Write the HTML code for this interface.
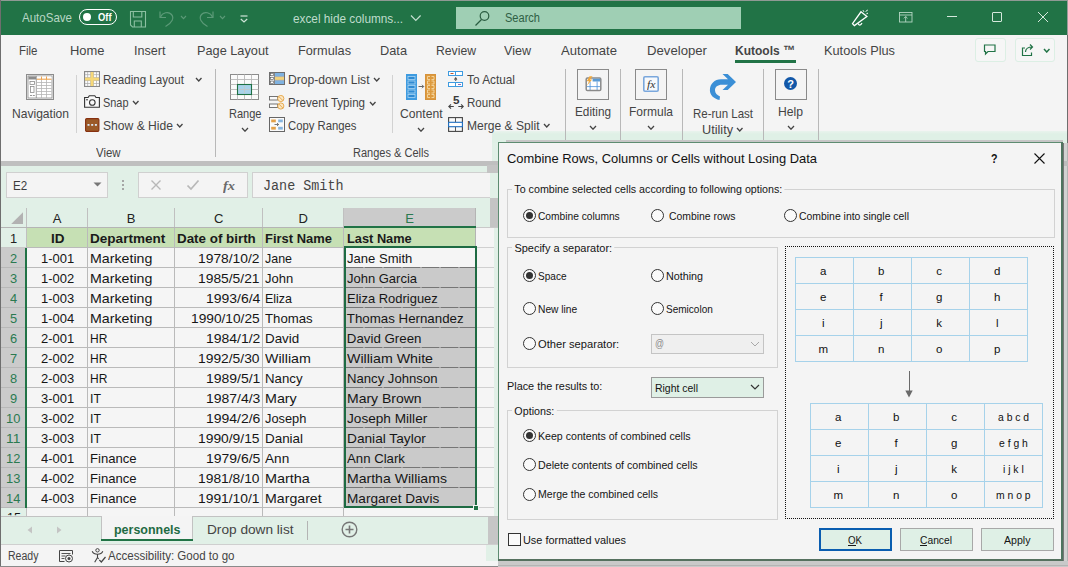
<!DOCTYPE html>
<html><head><meta charset="utf-8">
<style>
*{box-sizing:border-box;margin:0;padding:0}
html,body{width:1068px;height:567px;overflow:hidden;background:#f4f4f4;font-family:"Liberation Sans",sans-serif;}
.a{position:absolute;white-space:nowrap}
.t{position:absolute;white-space:nowrap;transform-origin:0 50%;line-height:1}
#title{left:0;top:0;width:1067px;height:35px;background:#217346}
#fbar{left:0;top:163px;width:1068px;height:45px;background:#e1f0e7}
.tab{color:#444;font-size:13.5px}
.rl{color:#444;font-size:13px}
.sep{position:absolute;width:1px;background:#d0d0d0}
</style></head><body>
<div class="a" id="title"></div>
<div class="a" style="left:0;top:161px;width:1068px;height:2px;background:#c8c8c8"></div>
<div class="a" id="fbar"></div>
<!-- gen_top -->
<div class="a" style="left:492px;top:131px;width:576px;height:12px;background:linear-gradient(#e9f3ed,#dff0e6 25%,#dff0e6);"></div>
<div class="a" style="left:0px;top:0px;width:1068px;height:1px;background:#8f9a94;"></div>
<div class="a" style="left:1067px;top:0px;width:1px;height:35px;background:#9a9a9a;"></div>
<div class="a" style="left:1066.6px;top:35px;width:1.4px;height:108px;background:#6e6e6e;"></div>
<div class="t" style="left:22.00px;top:10.87px;font-size:13.5px;color:#b7d6c4;transform:scaleX(0.8541);">AutoSave</div>
<div class="a" style="left:79px;top:9px;width:38px;height:16px;border:1.3px solid #fff;border-radius:8px;"></div>
<div class="a" style="left:83px;top:13px;width:8px;height:8px;background:#fff;border-radius:50%;"></div>
<div class="t" style="left:97.50px;top:12.84px;font-size:10px;color:#fff;font-weight:bold;transform:scaleX(0.9350);">Off</div>
<svg class="a" style="left:129px;top:10px;" width="18" height="18" viewBox="0 0 18 18" fill="none" stroke="#8cc0a2" stroke-width="1.1"><path d="M1.500 1.500h15v15.500h-13l-2-2z"/><path d="M4.300 1.500v5.500h8.500v-5.500"/><path d="M5.300 17v-6h7v6"/></svg>
<svg class="a" style="left:158px;top:9px;" width="18" height="19" viewBox="0 0 18 19" fill="none" stroke="#5c9a78" stroke-width="1.2"><path d="M2 2.500v6h6"/><path d="M2.500 8c2-4.500 8-6 11-2.500s0.500 8.500-6 12"/></svg>
<svg class="a" style="left:180px;top:15px;" width="7" height="4.6" viewBox="0 0 7 4.6" fill="none" stroke="#5c9a78" stroke-width="1.1"><path d="M1 1l2.5 2.6l2.5 -2.6"/></svg>
<svg class="a" style="left:197px;top:9px;" width="18" height="19" viewBox="0 0 18 19" fill="none" stroke="#5c9a78" stroke-width="1.2"><path d="M16 2.500v6h-6"/><path d="M15.500 8c-2-4.500-8-6-11-2.500s-0.500 8.500 6 12"/></svg>
<svg class="a" style="left:219px;top:15px;" width="7" height="4.6" viewBox="0 0 7 4.6" fill="none" stroke="#5c9a78" stroke-width="1.1"><path d="M1 1l2.5 2.6l2.5 -2.6"/></svg>
<svg class="a" style="left:239.3px;top:13.6px;" width="10" height="10" viewBox="0 0 10 10" fill="none" stroke="#cfe5d8" stroke-width="1.2"><path d="M1.500 2h7"/><path d="M1.800 5l3.200 3l3.200-3"/></svg>
<div class="t" style="left:293.00px;top:11.87px;font-size:13.5px;color:#bfdccc;transform:scaleX(0.8726);">excel hide columns...</div>
<svg class="a" style="left:409px;top:13px;" width="14" height="10" viewBox="0 0 14 10" fill="none" stroke="#c4dfd0" stroke-width="1.2"><path d="M2 2.500l4.800 4.800l4.800-4.800"/></svg>
<div class="a" style="left:456px;top:6.5px;width:285px;height:22.5px;background:#9fcfb4;"></div>
<svg class="a" style="left:474px;top:9px;" width="18" height="18" viewBox="0 0 18 18" fill="none" stroke="#2a5c40" stroke-width="1.2"><path d="M7.500 10.500l-6 6"/><circle cx="10.500" cy="7" r="4.300"/></svg>
<div class="t" style="left:505.00px;top:11.72px;font-size:12.5px;color:#2f6044;transform:scaleX(0.8837);">Search</div>
<svg class="a" style="left:851px;top:8px;" width="22" height="20" viewBox="0 0 22 20" fill="none" stroke="#fff" stroke-width="1.3"><path d="M10 3.800L15.900 8.400L3.400 17.600L1.500 15.600Z"/><path d="M7 15.500q1.800 3.300 4-0.300"/><path d="M12 2.200l0.900 1.600M14.600 3.500l2.200-1.500M15.400 5.800l1.600-0.700" stroke-width="1"/></svg>
<svg class="a" style="left:898.5px;top:11.5px;" width="15" height="12" viewBox="0 0 15 12" fill="none" stroke="#b4d6c3" stroke-width="0.9"><rect x="0.500" y="0.500" width="12.500" height="9.500"/><path d="M0.500 3h12.500"/><path d="M6.700 10v-5.500M4.900 6.300l1.800-1.800l1.800 1.800"/></svg>
<div class="a" style="left:947px;top:16px;width:10px;height:1px;background:#d5e8dc;"></div>
<div class="a" style="left:992px;top:12px;width:10px;height:10px;border:1px solid #d5e8dc;border-radius:1px;"></div>
<svg class="a" style="left:1037px;top:11px;" width="12" height="12" viewBox="0 0 12 12" fill="none" stroke="#d5e8dc" stroke-width="1"><path d="M1 1l10 10M11 1l-10 10"/></svg>
<div class="t" style="left:18.50px;top:43.87px;font-size:13.5px;color:#444;transform:scaleX(0.8505);">File</div>
<div class="t" style="left:70.00px;top:43.87px;font-size:13.5px;color:#444;transform:scaleX(0.9580);">Home</div>
<div class="t" style="left:134.00px;top:43.87px;font-size:13.5px;color:#444;transform:scaleX(0.9330);">Insert</div>
<div class="t" style="left:197.00px;top:43.87px;font-size:13.5px;color:#444;transform:scaleX(0.9431);">Page Layout</div>
<div class="t" style="left:298.00px;top:43.87px;font-size:13.5px;color:#444;transform:scaleX(0.9420);">Formulas</div>
<div class="t" style="left:380.00px;top:43.87px;font-size:13.5px;color:#444;transform:scaleX(0.9468);">Data</div>
<div class="t" style="left:436.00px;top:43.87px;font-size:13.5px;color:#444;transform:scaleX(0.9037);">Review</div>
<div class="t" style="left:504.00px;top:43.87px;font-size:13.5px;color:#444;transform:scaleX(0.9305);">View</div>
<div class="t" style="left:561.00px;top:43.87px;font-size:13.5px;color:#444;transform:scaleX(0.9691);">Automate</div>
<div class="t" style="left:647.00px;top:43.87px;font-size:13.5px;color:#444;transform:scaleX(0.9751);">Developer</div>
<div class="t" style="left:735.00px;top:43.87px;font-size:13.5px;color:#444;font-weight:bold;transform:scaleX(0.8890);">Kutools ™</div>
<div class="a" style="left:735px;top:60px;width:61px;height:3px;background:#217346;"></div>
<div class="t" style="left:824.00px;top:43.87px;font-size:13.5px;color:#444;transform:scaleX(0.9461);">Kutools Plus</div>
<div class="a" style="left:974.5px;top:38px;width:31.5px;height:24px;background:#f6f6f6;border:1px solid #dcefe4;border-radius:3px;"></div>
<svg class="a" style="left:983px;top:44px;" width="14" height="12" viewBox="0 0 14 12" fill="none" stroke="#217346" stroke-width="1.2"><path d="M1.500 1h10.500v6.500h-7l-2.500 2.500v-2.500h-1z"/></svg>
<div class="a" style="left:1014.5px;top:38px;width:40.5px;height:24px;background:#f6f6f6;border:1px solid #dcefe4;border-radius:3px;"></div>
<svg class="a" style="left:1021px;top:43px;" width="14" height="14" viewBox="0 0 14 14" fill="none" stroke="#217346" stroke-width="1.2"><path d="M4 5h-2.500v7.500h9v-3"/><path d="M4.500 9c0-3 2-5 7-5M9 1.500l2.500 2.500l-2.500 2.500"/></svg>
<svg class="a" style="left:1042.7px;top:48px;" width="7.5" height="5" viewBox="0 0 7.5 5" fill="none" stroke="#217346" stroke-width="1.5"><path d="M1 1l2.75 3l2.75 -3"/></svg>
<!-- gen_ribbon -->
<div class="a" style="left:215px;top:69px;width:1.2px;height:88px;background:#b8b8b8;"></div>
<div class="a" style="left:565.3px;top:69px;width:1.2px;height:88px;background:#b8b8b8;"></div>
<div class="a" style="left:620.3px;top:69px;width:1.2px;height:88px;background:#b8b8b8;"></div>
<div class="a" style="left:682px;top:69px;width:1.2px;height:88px;background:#b8b8b8;"></div>
<div class="a" style="left:763px;top:69px;width:1.2px;height:88px;background:#b8b8b8;"></div>
<div class="a" style="left:818px;top:69px;width:1.2px;height:88px;background:#b8b8b8;"></div>
<div class="a" style="left:76px;top:75px;width:1px;height:58px;background:#d2d2d2;"></div>
<div class="a" style="left:391.7px;top:75px;width:1px;height:58px;background:#d2d2d2;"></div>
<svg class="a" style="left:26px;top:74px;" width="28" height="26" viewBox="0 0 28 26" fill="none" stroke="none" stroke-width="1"><rect x="0.500" y="0.500" width="27" height="25" stroke="#8c8c8c" fill="#f3f3f3"/><rect x="2" y="2" width="24" height="22" fill="#fff" stroke="#8c8c8c" stroke-width="0.800"/><rect x="2.500" y="2.500" width="7.500" height="3" fill="#8c8c8c"/><rect x="10.500" y="2.500" width="15" height="3" fill="#fff"/><path d="M10.500 5.200h15" stroke="#e8912d" stroke-width="0.900"/><path d="M15.500 2.500v3M20.500 2.500v3" stroke="#e8912d" stroke-width="0.800"/><path d="M10.300 2v22" stroke="#8c8c8c" stroke-width="0.800"/><path d="M10.500 8.5h15" stroke="#b5b5b5" stroke-width="0.800"/><path d="M10.500 11.5h15" stroke="#b5b5b5" stroke-width="0.800"/><path d="M10.500 14.5h15" stroke="#b5b5b5" stroke-width="0.800"/><path d="M10.500 17.5h15" stroke="#b5b5b5" stroke-width="0.800"/><path d="M10.500 20.5h15" stroke="#b5b5b5" stroke-width="0.800"/><path d="M15.5 6v18" stroke="#b5b5b5" stroke-width="0.800"/><path d="M20.5 6v18" stroke="#b5b5b5" stroke-width="0.800"/><rect x="4" y="7.500" width="4.500" height="3" stroke="#8c8c8c" stroke-width="0.800" fill="#fff"/><rect x="4.500" y="12.500" width="3.500" height="6" stroke="#8c8c8c" stroke-width="0.800" fill="#fff"/><path d="M4 21.500h2M6.800 21.500h2" stroke="#8c8c8c" stroke-width="0.900"/></svg>
<div class="t" style="left:11.50px;top:107.30px;font-size:13px;color:#444;transform:scaleX(0.9279);">Navigation</div>
<svg class="a" style="left:84px;top:71px;" width="16" height="16" viewBox="0 0 16 16" fill="none" stroke="none" stroke-width="1"><rect x="0.500" y="0.500" width="15" height="15" fill="#a8a8a8" stroke="#8a8a8a"/><rect x="1.2" y="1.2" width="2.200" height="2.200" fill="#fbfbfb"/><rect x="1.2" y="4.1" width="2.200" height="2.200" fill="#fbfbfb"/><rect x="1.2" y="9.8" width="2.200" height="2.200" fill="#fbfbfb"/><rect x="1.2" y="12.7" width="2.200" height="2.200" fill="#fbfbfb"/><rect x="4.1" y="1.2" width="2.200" height="2.200" fill="#fbfbfb"/><rect x="4.1" y="4.1" width="2.200" height="2.200" fill="#fbfbfb"/><rect x="4.1" y="9.8" width="2.200" height="2.200" fill="#fbfbfb"/><rect x="4.1" y="12.7" width="2.200" height="2.200" fill="#fbfbfb"/><rect x="9.8" y="1.2" width="2.200" height="2.200" fill="#fbfbfb"/><rect x="9.8" y="4.1" width="2.200" height="2.200" fill="#fbfbfb"/><rect x="9.8" y="9.8" width="2.200" height="2.200" fill="#fbfbfb"/><rect x="9.8" y="12.7" width="2.200" height="2.200" fill="#fbfbfb"/><rect x="12.7" y="1.2" width="2.200" height="2.200" fill="#fbfbfb"/><rect x="12.7" y="4.1" width="2.200" height="2.200" fill="#fbfbfb"/><rect x="12.7" y="9.8" width="2.200" height="2.200" fill="#fbfbfb"/><rect x="12.7" y="12.7" width="2.200" height="2.200" fill="#fbfbfb"/><rect x="6.600" y="1" width="2.900" height="14" fill="#f6d878"/><rect x="1" y="6.600" width="14" height="2.900" fill="#f6d878"/></svg>
<div class="t" style="left:102.80px;top:73.30px;font-size:13px;color:#444;transform:scaleX(0.8894);">Reading Layout</div>
<svg class="a" style="left:194.5px;top:76.5px;" width="7.5" height="5" viewBox="0 0 7.5 5" fill="none" stroke="#444" stroke-width="1.3"><path d="M1 1l2.75 3l2.75 -3"/></svg>
<svg class="a" style="left:84px;top:95px;" width="16" height="13" viewBox="0 0 16 13" fill="none" stroke="none" stroke-width="1"><path d="M0.600 2.500h3.500l1.200-1.800h5.500l1.200 1.800h3.400v9.700h-14.800z" stroke="#333" stroke-width="1.100" fill="#f8f8f8"/><circle cx="8.300" cy="7.500" r="2.800" stroke="#333" stroke-width="1.100"/><rect x="2.300" y="4" width="1.400" height="1.400" fill="#333"/></svg>
<div class="t" style="left:103.00px;top:96.30px;font-size:13px;color:#444;transform:scaleX(0.8399);">Snap</div>
<svg class="a" style="left:132.0px;top:100.0px;" width="7.5" height="5" viewBox="0 0 7.5 5" fill="none" stroke="#444" stroke-width="1.3"><path d="M1 1l2.75 3l2.75 -3"/></svg>
<svg class="a" style="left:85px;top:118px;" width="15" height="14" viewBox="0 0 15 14" fill="none" stroke="none" stroke-width="1"><rect x="0.600" y="0.600" width="13.300" height="12.800" rx="1.200" fill="#9b5a28" stroke="#86300f" stroke-width="1.100"/><rect x="2.500" y="6" width="2" height="1.800" fill="#dbe6f2"/><rect x="6.200" y="6" width="2" height="1.800" fill="#dbe6f2"/><rect x="9.900" y="6" width="2" height="1.800" fill="#dbe6f2"/></svg>
<div class="t" style="left:103.00px;top:119.30px;font-size:13px;color:#444;transform:scaleX(0.9315);">Show &amp; Hide</div>
<svg class="a" style="left:176.0px;top:123.0px;" width="7.5" height="5" viewBox="0 0 7.5 5" fill="none" stroke="#444" stroke-width="1.3"><path d="M1 1l2.75 3l2.75 -3"/></svg>
<div class="t" style="left:96.00px;top:147.14px;font-size:12px;color:#444;transform:scaleX(0.9499);">View</div>
<svg class="a" style="left:230px;top:74px;" width="29" height="26" viewBox="0 0 29 26" fill="none" stroke="none" stroke-width="1"><rect x="0.500" y="0.500" width="28" height="25" fill="#fbfbfb" stroke="#8c8c8c"/><path d="M7.5 0.500v25" stroke="#b8b8b8" stroke-width="0.900"/><path d="M14.5 0.500v25" stroke="#b8b8b8" stroke-width="0.900"/><path d="M21.5 0.500v25" stroke="#b8b8b8" stroke-width="0.900"/><path d="M0.500 5.5h28" stroke="#b8b8b8" stroke-width="0.900"/><path d="M0.500 10.5h28" stroke="#b8b8b8" stroke-width="0.900"/><path d="M0.500 15.5h28" stroke="#b8b8b8" stroke-width="0.900"/><path d="M0.500 20.5h28" stroke="#b8b8b8" stroke-width="0.900"/><rect x="7.500" y="10.500" width="14" height="10" fill="#a9d3ea" stroke="#1e7145" stroke-width="1.100"/><path d="M14.500 11.500v8M8.500 15.500h12" stroke="#c0c8cc" stroke-width="0.900"/></svg>
<div class="t" style="left:228.50px;top:107.30px;font-size:13px;color:#444;transform:scaleX(0.8484);">Range</div>
<svg class="a" style="left:240.5px;top:126.5px;" width="8" height="5.2" viewBox="0 0 8 5.2" fill="none" stroke="#444" stroke-width="1.3"><path d="M1 1l3.0 3.2l3.0 -3.2"/></svg>
<svg class="a" style="left:269px;top:72px;" width="16" height="13" viewBox="0 0 16 13" fill="none" stroke="none" stroke-width="1"><rect x="0.500" y="0.500" width="15" height="12" fill="#ededed" stroke="#6e6e6e"/><rect x="5.800" y="1" width="9.200" height="3.500" fill="#7fb2e0"/><rect x="5.800" y="4.700" width="9.200" height="3.500" fill="#f3d27a"/><rect x="5.800" y="8.400" width="9.200" height="3.600" fill="#7fb2e0"/><path d="M5.500 0.500v12" stroke="#6e6e6e" stroke-width="0.800"/><path d="M5.500 4.600h9.500M5.500 8.300h9.500" stroke="#8d99a5" stroke-width="0.600"/><rect x="1.500" y="1.5" width="2.800" height="2.200" fill="#fff" stroke="#555" stroke-width="0.600"/><rect x="1.500" y="5.3" width="2.800" height="2.200" fill="#fff" stroke="#555" stroke-width="0.600"/><rect x="1.500" y="9.1" width="2.800" height="2.200" fill="#fff" stroke="#555" stroke-width="0.600"/></svg>
<div class="t" style="left:287.70px;top:73.30px;font-size:13px;color:#444;transform:scaleX(0.9322);">Drop-down List</div>
<svg class="a" style="left:372.5px;top:77.0px;" width="7.5" height="5" viewBox="0 0 7.5 5" fill="none" stroke="#444" stroke-width="1.3"><path d="M1 1l2.75 3l2.75 -3"/></svg>
<svg class="a" style="left:269px;top:95px;" width="16" height="15" viewBox="0 0 16 15" fill="none" stroke="none" stroke-width="1"><rect x="0.500" y="1.500" width="8" height="3.500" fill="#fafafa" stroke="#666" stroke-width="0.900"/><rect x="0.500" y="9" width="8" height="3.500" fill="#fafafa" stroke="#666" stroke-width="0.900"/><circle cx="11.800" cy="3.5" r="3.100" fill="#fbe7c4" stroke="#e5a443" stroke-width="0.900"/><path d="M9.700 1.4l4.200 4.200" stroke="#e5a443" stroke-width="0.900"/><circle cx="11.800" cy="11" r="3.100" fill="#fbe7c4" stroke="#e5a443" stroke-width="0.900"/><path d="M9.700 8.9l4.200 4.200" stroke="#e5a443" stroke-width="0.900"/></svg>
<div class="t" style="left:287.70px;top:96.30px;font-size:13px;color:#444;transform:scaleX(0.8904);">Prevent Typing</div>
<svg class="a" style="left:368.5px;top:100.5px;" width="7.5" height="5" viewBox="0 0 7.5 5" fill="none" stroke="#444" stroke-width="1.3"><path d="M1 1l2.75 3l2.75 -3"/></svg>
<svg class="a" style="left:269px;top:117px;" width="16" height="15" viewBox="0 0 16 15" fill="none" stroke="none" stroke-width="1"><rect x="0.500" y="0.500" width="15" height="14" fill="#fafafa" stroke="#666"/><rect x="2.200" y="2.500" width="4.600" height="2.800" fill="#e3a14a"/><rect x="2.200" y="9.800" width="4.600" height="2.800" fill="#e3a14a"/><rect x="9.200" y="2.500" width="4.600" height="2.800" fill="#86b5e0"/><rect x="9.200" y="9.800" width="4.600" height="2.800" fill="#86b5e0"/><path d="M5.500 7.500h4M8 6l1.600 1.500l-1.600 1.500" stroke="#555" stroke-width="0.800"/></svg>
<div class="t" style="left:287.70px;top:119.30px;font-size:13px;color:#444;transform:scaleX(0.8696);">Copy Ranges</div>
<div class="t" style="left:352.50px;top:147.14px;font-size:12px;color:#444;transform:scaleX(0.9189);">Ranges &amp; Cells</div>
<svg class="a" style="left:406px;top:74px;" width="31" height="26" viewBox="0 0 31 26" fill="none" stroke="none" stroke-width="1"><rect x="0.500" y="0.500" width="10" height="25" fill="#3e9be0" stroke="#3e9be0"/><rect x="2" y="2.5" width="7" height="3" fill="#2f8ad2" stroke="#a9d4f3" stroke-width="0.800"/><rect x="2" y="7" width="7" height="3" fill="#2f8ad2" stroke="#a9d4f3" stroke-width="0.800"/><rect x="2" y="11.5" width="7" height="3" fill="#2f8ad2" stroke="#a9d4f3" stroke-width="0.800"/><rect x="2" y="16" width="7" height="3" fill="#2f8ad2" stroke="#a9d4f3" stroke-width="0.800"/><rect x="2" y="20.5" width="7" height="3" fill="#2f8ad2" stroke="#a9d4f3" stroke-width="0.800"/><rect x="19.500" y="0.500" width="10" height="25" fill="#dd9a3e" stroke="#d6923a"/><path d="M24 2.5h-2.500v3h2.500M25.500 2.5h2.500v3h-2.500" stroke="#f9dfb0" stroke-width="0.800"/><path d="M24 7h-2.500v3h2.500M25.500 7h2.500v3h-2.500" stroke="#f9dfb0" stroke-width="0.800"/><path d="M24 11.5h-2.500v3h2.500M25.500 11.5h2.500v3h-2.500" stroke="#f9dfb0" stroke-width="0.800"/><path d="M24 16h-2.500v3h2.500M25.500 16h2.500v3h-2.500" stroke="#f9dfb0" stroke-width="0.800"/><path d="M24 20.5h-2.500v3h2.500M25.500 20.5h2.500v3h-2.500" stroke="#f9dfb0" stroke-width="0.800"/><path d="M12.500 12.500h5M16 10.800l1.700 1.700l-1.700 1.700" stroke="#555" stroke-width="0.900"/></svg>
<div class="t" style="left:399.50px;top:107.30px;font-size:13px;color:#444;transform:scaleX(0.9334);">Content</div>
<svg class="a" style="left:416.5px;top:126.5px;" width="8" height="5.2" viewBox="0 0 8 5.2" fill="none" stroke="#444" stroke-width="1.3"><path d="M1 1l3.0 3.2l3.0 -3.2"/></svg>
<svg class="a" style="left:448px;top:71px;" width="16" height="17" viewBox="0 0 16 17" fill="none" stroke="none" stroke-width="1"><rect x="0.500" y="0.500" width="14" height="4" fill="#fff" stroke="#3e9be0" stroke-width="1"/><path d="M7.500 0.500v4" stroke="#3e9be0"/><rect x="0.500" y="11.500" width="14" height="4" fill="#fff" stroke="#3e9be0" stroke-width="1"/><path d="M7.500 11.500v4" stroke="#3e9be0"/><path d="M2.500 2.500h3" stroke="#b5451b" stroke-width="0.900"/><path d="M10 13.500h3" stroke="#8b5aa8" stroke-width="0.900"/><path d="M7.700 6v3.500M6.300 8l1.400 1.500l1.400-1.500M6.500 7.500h2.400" stroke="#444" stroke-width="0.800"/></svg>
<div class="t" style="left:466.70px;top:73.30px;font-size:13px;color:#444;transform:scaleX(0.9099);">To Actual</div>
<svg class="a" style="left:448px;top:96px;" width="16" height="14" viewBox="0 0 16 14" fill="none" stroke="none" stroke-width="1"><path d="M0.800 10.500h5M3 8.300l-2.200 2.200l2.200 2.200M15.300 10.500h-5M13.100 8.300l2.200 2.200l-2.200 2.200" stroke="#444" stroke-width="1.100"/></svg>
<div class="t" style="left:453.00px;top:94.57px;font-size:11.5px;color:#3a3a3a;font-weight:bold;transform:scaleX(1.0163);">5</div>
<div class="t" style="left:466.70px;top:96.30px;font-size:13px;color:#444;transform:scaleX(0.8875);">Round</div>
<svg class="a" style="left:448px;top:117px;" width="15" height="15" viewBox="0 0 15 15" fill="none" stroke="none" stroke-width="1"><rect x="0.600" y="0.600" width="13.800" height="13.800" fill="#fafafa" stroke="#444" stroke-width="1.100"/><path d="M7.500 0.600v4.700M7.500 9.800v4.600" stroke="#444" stroke-width="0.900"/><rect x="0.600" y="5.300" width="13.800" height="4.400" fill="#fff" stroke="#1e6ec0" stroke-width="1.100"/></svg>
<div class="t" style="left:466.70px;top:119.30px;font-size:13px;color:#444;transform:scaleX(0.9291);">Merge &amp; Split</div>
<svg class="a" style="left:543.0px;top:123.0px;" width="7.5" height="5" viewBox="0 0 7.5 5" fill="none" stroke="#444" stroke-width="1.3"><path d="M1 1l2.75 3l2.75 -3"/></svg>
<div class="a" style="left:577px;top:69px;width:32px;height:31px;background:#f4f4f4;border:1px solid #8a8a8a;"></div>
<svg class="a" style="left:584.5px;top:75.5px;" width="17" height="16" viewBox="0 0 17 16" fill="none" stroke="none" stroke-width="1"><rect x="1.200" y="2" width="14.600" height="12.600" rx="1.300" fill="#fff" stroke="#8a8a8a" stroke-width="1.500"/><rect x="7.600" y="2.700" width="7.500" height="2.800" fill="#5a9bd5"/><path d="M5.100 5.500v8.500M12.100 5.500v8.500M2 10.600h13" stroke="#4a90d9" stroke-width="0.800"/><path d="M7.600 0.300h-3.100l-2.800 5h2.300l-2 4.200l5.200-5.900h-2.200z" fill="#f0a83c"/></svg>
<div class="t" style="left:574.50px;top:105.30px;font-size:13px;color:#444;transform:scaleX(0.9057);">Editing</div>
<svg class="a" style="left:588.5px;top:124.5px;" width="8" height="5.2" viewBox="0 0 8 5.2" fill="none" stroke="#444" stroke-width="1.3"><path d="M1 1l3.0 3.2l3.0 -3.2"/></svg>
<div class="a" style="left:635px;top:69px;width:32px;height:31px;background:#f4f4f4;border:1px solid #8a8a8a;"></div>
<svg class="a" style="left:643px;top:76px;" width="16" height="16" viewBox="0 0 16 16" fill="none" stroke="none" stroke-width="1"><rect x="0.800" y="0.800" width="14.400" height="14.400" rx="1.200" fill="#f7f9fc" stroke="#7aa7dc" stroke-width="1.600"/></svg>
<div class="t" style="left:646.50px;top:79.92px;font-size:10px;color:#333;font-family:'Liberation Serif',serif;font-style:italic;transform:scaleX(1.1778);">fx</div>
<div class="t" style="left:629.00px;top:105.30px;font-size:13px;color:#444;transform:scaleX(0.9229);">Formula</div>
<svg class="a" style="left:646.5px;top:124.5px;" width="8" height="5.2" viewBox="0 0 8 5.2" fill="none" stroke="#444" stroke-width="1.3"><path d="M1 1l3.0 3.2l3.0 -3.2"/></svg>
<svg class="a" style="left:709px;top:74px;" width="28" height="26" viewBox="0 0 28 26" fill="none" stroke="none" stroke-width="1"><path d="M13.500 0L18.700 0L27 8L18.700 16L13.500 16L19 10.700L13 10.700C8.500 10.700 6 13 6 16.200C6 19 8 21 11 22.500L10.500 26C4.500 24.500 0.900 21 0.900 16.200C0.900 10 5.500 5.300 12 5.300L19 5.300Z" fill="#3b8fd6"/></svg>
<div class="t" style="left:693.00px;top:107.30px;font-size:13px;color:#444;transform:scaleX(0.8834);">Re-run Last</div>
<div class="t" style="left:702.00px;top:123.30px;font-size:13px;color:#444;transform:scaleX(0.9756);">Utility</div>
<svg class="a" style="left:735.5px;top:127.0px;" width="7.5" height="5" viewBox="0 0 7.5 5" fill="none" stroke="#444" stroke-width="1.3"><path d="M1 1l2.75 3l2.75 -3"/></svg>
<div class="a" style="left:774.7px;top:69px;width:32px;height:31px;background:#f4f4f4;border:1px solid #8a8a8a;"></div>
<div class="a" style="left:784.2px;top:77.3px;width:13px;height:13px;background:#1257a8;border-radius:50%;"></div>
<div class="t" style="left:787.34px;top:78.99px;font-size:11px;color:#fff;font-weight:bold;">?</div>
<div class="t" style="left:778.00px;top:105.30px;font-size:13px;color:#444;transform:scaleX(0.9351);">Help</div>
<svg class="a" style="left:786.5px;top:124.5px;" width="8" height="5.2" viewBox="0 0 8 5.2" fill="none" stroke="#444" stroke-width="1.3"><path d="M1 1l3.0 3.2l3.0 -3.2"/></svg>
<!-- gen_grid -->
<div class="a" style="left:0px;top:161px;width:1068px;height:4.5px;background:#bfbfbf;"></div>
<div class="a" style="left:6px;top:172px;width:102px;height:26px;background:#f4f4f4;border:1px solid #d0d0d0;"></div>
<div class="t" style="left:12.50px;top:179.04px;font-size:13.3px;color:#3c3c3c;transform:scaleX(0.8729);">E2</div>
<svg class="a" style="left:93px;top:182px;" width="9" height="5" viewBox="0 0 9 5" fill="none" stroke="none" stroke-width="1"><path d="M0.500 0.500h8l-4 4z" fill="#777"/></svg>
<div class="a" style="left:122px;top:180px;width:2px;height:2px;background:#a6a6a6;"></div>
<div class="a" style="left:122px;top:184px;width:2px;height:2px;background:#a6a6a6;"></div>
<div class="a" style="left:122px;top:188px;width:2px;height:2px;background:#a6a6a6;"></div>
<div class="a" style="left:138px;top:172px;width:110px;height:26px;background:#f4f4f4;border:1px solid #d0d0d0;"></div>
<svg class="a" style="left:150px;top:179px;" width="12" height="12" viewBox="0 0 12 12" fill="none" stroke="#b8b8b8" stroke-width="1.4"><path d="M1.500 1.500l9 9M10.500 1.500l-9 9"/></svg>
<svg class="a" style="left:186px;top:179px;" width="14" height="12" viewBox="0 0 14 12" fill="none" stroke="#b8b8b8" stroke-width="1.7"><path d="M1.500 6.500l3.500 3.500l7.500-8.500"/></svg>
<div class="t" style="left:223.00px;top:178.99px;font-size:13.5px;color:#6a6a6a;font-family:'Liberation Serif',serif;font-weight:bold;font-style:italic;transform:scaleX(1.0671);">fx</div>
<div class="a" style="left:251.5px;top:172px;width:816px;height:26px;background:#f4f4f4;border:1px solid #d0d0d0;"></div>
<div class="t" style="left:262.50px;top:179.19px;font-size:14.5px;color:#444;font-family:'Liberation Mono',monospace;transform:scaleX(0.9251);">Jane Smith</div>
<div class="a" style="left:0px;top:208px;width:498px;height:309px;background:#f5f5f5;"></div>
<div class="a" style="left:0px;top:208px;width:498px;height:20px;background:#e1f0e7;"></div>
<div class="a" style="left:344px;top:208px;width:132px;height:19px;background:#cbcbcb;"></div>
<svg class="a" style="left:11px;top:212px;" width="13" height="13" viewBox="0 0 13 13" fill="none" stroke="none" stroke-width="1"><path d="M12 0.200v11.800h-11.800z" fill="#b2b2b2"/></svg>
<div class="t" style="left:52.86px;top:212.30px;font-size:13px;color:#222;">A</div>
<div class="t" style="left:126.86px;top:212.30px;font-size:13px;color:#222;">B</div>
<div class="t" style="left:214.01px;top:212.30px;font-size:13px;color:#222;">C</div>
<div class="t" style="left:298.51px;top:212.30px;font-size:13px;color:#222;">D</div>
<div class="t" style="left:405.36px;top:212.30px;font-size:13px;color:#2a7a50;">E</div>
<div class="a" style="left:26px;top:208px;width:1px;height:20px;background:#c0c0c0;"></div>
<div class="a" style="left:87px;top:208px;width:1px;height:20px;background:#c0c0c0;"></div>
<div class="a" style="left:174px;top:208px;width:1px;height:20px;background:#c0c0c0;"></div>
<div class="a" style="left:262px;top:208px;width:1px;height:20px;background:#c0c0c0;"></div>
<div class="a" style="left:343px;top:208px;width:1px;height:20px;background:#c0c0c0;"></div>
<div class="a" style="left:0px;top:227px;width:344px;height:1px;background:#b5b5b5;"></div>
<div class="a" style="left:476px;top:227px;width:22px;height:1px;background:#c9c9c9;"></div>
<div class="a" style="left:0px;top:228px;width:26px;height:20px;background:#e1f0e7;"></div>
<div class="a" style="left:0px;top:248px;width:26px;height:260px;background:#cbcbcb;"></div>
<div class="a" style="left:0px;top:508px;width:26px;height:9px;background:#e1f0e7;"></div>
<div class="a" style="left:27px;top:228px;width:449px;height:19px;background:#c6e0b4;"></div>
<div class="a" style="left:344px;top:268px;width:132px;height:240px;background:#cacaca;"></div>
<div class="a" style="left:0px;top:247px;width:26px;height:1px;background:#c8c8c8;"></div>
<div class="a" style="left:27px;top:247px;width:316px;height:1px;background:#bababa;"></div>
<div class="a" style="left:477px;top:247px;width:17px;height:1px;background:#d0d0d0;"></div>
<div class="a" style="left:0px;top:267px;width:26px;height:1px;background:#b8b8b8;"></div>
<div class="a" style="left:27px;top:267px;width:316px;height:1px;background:#bababa;"></div>
<div class="a" style="left:477px;top:267px;width:17px;height:1px;background:#d0d0d0;"></div>
<div class="a" style="left:0px;top:287px;width:26px;height:1px;background:#b8b8b8;"></div>
<div class="a" style="left:27px;top:287px;width:316px;height:1px;background:#bababa;"></div>
<div class="a" style="left:477px;top:287px;width:17px;height:1px;background:#d0d0d0;"></div>
<div class="a" style="left:0px;top:307px;width:26px;height:1px;background:#b8b8b8;"></div>
<div class="a" style="left:27px;top:307px;width:316px;height:1px;background:#bababa;"></div>
<div class="a" style="left:477px;top:307px;width:17px;height:1px;background:#d0d0d0;"></div>
<div class="a" style="left:0px;top:327px;width:26px;height:1px;background:#b8b8b8;"></div>
<div class="a" style="left:27px;top:327px;width:316px;height:1px;background:#bababa;"></div>
<div class="a" style="left:477px;top:327px;width:17px;height:1px;background:#d0d0d0;"></div>
<div class="a" style="left:0px;top:347px;width:26px;height:1px;background:#b8b8b8;"></div>
<div class="a" style="left:27px;top:347px;width:316px;height:1px;background:#bababa;"></div>
<div class="a" style="left:477px;top:347px;width:17px;height:1px;background:#d0d0d0;"></div>
<div class="a" style="left:0px;top:367px;width:26px;height:1px;background:#b8b8b8;"></div>
<div class="a" style="left:27px;top:367px;width:316px;height:1px;background:#bababa;"></div>
<div class="a" style="left:477px;top:367px;width:17px;height:1px;background:#d0d0d0;"></div>
<div class="a" style="left:0px;top:387px;width:26px;height:1px;background:#b8b8b8;"></div>
<div class="a" style="left:27px;top:387px;width:316px;height:1px;background:#bababa;"></div>
<div class="a" style="left:477px;top:387px;width:17px;height:1px;background:#d0d0d0;"></div>
<div class="a" style="left:0px;top:407px;width:26px;height:1px;background:#b8b8b8;"></div>
<div class="a" style="left:27px;top:407px;width:316px;height:1px;background:#bababa;"></div>
<div class="a" style="left:477px;top:407px;width:17px;height:1px;background:#d0d0d0;"></div>
<div class="a" style="left:0px;top:427px;width:26px;height:1px;background:#b8b8b8;"></div>
<div class="a" style="left:27px;top:427px;width:316px;height:1px;background:#bababa;"></div>
<div class="a" style="left:477px;top:427px;width:17px;height:1px;background:#d0d0d0;"></div>
<div class="a" style="left:0px;top:447px;width:26px;height:1px;background:#b8b8b8;"></div>
<div class="a" style="left:27px;top:447px;width:316px;height:1px;background:#bababa;"></div>
<div class="a" style="left:477px;top:447px;width:17px;height:1px;background:#d0d0d0;"></div>
<div class="a" style="left:0px;top:467px;width:26px;height:1px;background:#b8b8b8;"></div>
<div class="a" style="left:27px;top:467px;width:316px;height:1px;background:#bababa;"></div>
<div class="a" style="left:477px;top:467px;width:17px;height:1px;background:#d0d0d0;"></div>
<div class="a" style="left:0px;top:487px;width:26px;height:1px;background:#b8b8b8;"></div>
<div class="a" style="left:27px;top:487px;width:316px;height:1px;background:#bababa;"></div>
<div class="a" style="left:477px;top:487px;width:17px;height:1px;background:#d0d0d0;"></div>
<div class="a" style="left:0px;top:507px;width:26px;height:1px;background:#b8b8b8;"></div>
<div class="a" style="left:27px;top:507px;width:316px;height:1px;background:#bababa;"></div>
<div class="a" style="left:477px;top:507px;width:17px;height:1px;background:#d0d0d0;"></div>
<div class="a" style="left:87px;top:228px;width:1px;height:289px;background:#bababa;"></div>
<div class="a" style="left:174px;top:228px;width:1px;height:289px;background:#bababa;"></div>
<div class="a" style="left:262px;top:228px;width:1px;height:289px;background:#bababa;"></div>
<div class="a" style="left:343px;top:228px;width:1px;height:289px;background:#bababa;"></div>
<div class="a" style="left:346px;top:267px;width:129px;height:1px;background:repeating-linear-gradient(90deg,#767676 0 17px,#a4a4a4 17px 19px);"></div>
<div class="a" style="left:346px;top:287px;width:129px;height:1px;background:repeating-linear-gradient(90deg,#767676 0 17px,#a4a4a4 17px 19px);"></div>
<div class="a" style="left:346px;top:307px;width:129px;height:1px;background:repeating-linear-gradient(90deg,#767676 0 17px,#a4a4a4 17px 19px);"></div>
<div class="a" style="left:346px;top:327px;width:129px;height:1px;background:repeating-linear-gradient(90deg,#767676 0 17px,#a4a4a4 17px 19px);"></div>
<div class="a" style="left:346px;top:347px;width:129px;height:1px;background:repeating-linear-gradient(90deg,#767676 0 17px,#a4a4a4 17px 19px);"></div>
<div class="a" style="left:346px;top:367px;width:129px;height:1px;background:repeating-linear-gradient(90deg,#767676 0 17px,#a4a4a4 17px 19px);"></div>
<div class="a" style="left:346px;top:387px;width:129px;height:1px;background:repeating-linear-gradient(90deg,#767676 0 17px,#a4a4a4 17px 19px);"></div>
<div class="a" style="left:346px;top:407px;width:129px;height:1px;background:repeating-linear-gradient(90deg,#767676 0 17px,#a4a4a4 17px 19px);"></div>
<div class="a" style="left:346px;top:427px;width:129px;height:1px;background:repeating-linear-gradient(90deg,#767676 0 17px,#a4a4a4 17px 19px);"></div>
<div class="a" style="left:346px;top:447px;width:129px;height:1px;background:repeating-linear-gradient(90deg,#767676 0 17px,#a4a4a4 17px 19px);"></div>
<div class="a" style="left:346px;top:467px;width:129px;height:1px;background:repeating-linear-gradient(90deg,#767676 0 17px,#a4a4a4 17px 19px);"></div>
<div class="a" style="left:346px;top:487px;width:129px;height:1px;background:repeating-linear-gradient(90deg,#767676 0 17px,#a4a4a4 17px 19px);"></div>
<div class="a" style="left:25px;top:248px;width:2px;height:260px;background:#217346;"></div>
<div class="a" style="left:26px;top:228px;width:1px;height:20px;background:#c0c0c0;"></div>
<div class="a" style="left:475px;top:208px;width:1px;height:39px;background:#b4b4b4;"></div>
<div class="a" style="left:344px;top:226px;width:132px;height:2px;background:#217346;"></div>
<div class="a" style="left:343.5px;top:246px;width:133px;height:262px;border:2px solid #1e6b43;"></div>
<div class="a" style="left:472.5px;top:505px;width:6px;height:6px;background:#217346;border:1px solid #f5f5f5;"></div>
<div class="t" style="left:9.93px;top:232.04px;font-size:13.3px;color:#222;transform:scaleX(0.9666);">1</div>
<div class="t" style="left:9.93px;top:252.04px;font-size:13.3px;color:#2a7a50;transform:scaleX(0.9666);">2</div>
<div class="t" style="left:9.93px;top:272.04px;font-size:13.3px;color:#2a7a50;transform:scaleX(0.9666);">3</div>
<div class="t" style="left:9.93px;top:292.04px;font-size:13.3px;color:#2a7a50;transform:scaleX(0.9666);">4</div>
<div class="t" style="left:9.93px;top:312.04px;font-size:13.3px;color:#2a7a50;transform:scaleX(0.9666);">5</div>
<div class="t" style="left:9.93px;top:332.04px;font-size:13.3px;color:#2a7a50;transform:scaleX(0.9666);">6</div>
<div class="t" style="left:9.93px;top:352.04px;font-size:13.3px;color:#2a7a50;transform:scaleX(0.9666);">7</div>
<div class="t" style="left:9.93px;top:372.04px;font-size:13.3px;color:#2a7a50;transform:scaleX(0.9666);">8</div>
<div class="t" style="left:9.93px;top:392.04px;font-size:13.3px;color:#2a7a50;transform:scaleX(0.9666);">9</div>
<div class="t" style="left:6.35px;top:412.04px;font-size:13.3px;color:#2a7a50;transform:scaleX(0.9666);">10</div>
<div class="t" style="left:6.35px;top:432.04px;font-size:13.3px;color:#2a7a50;transform:scaleX(1.0357);">11</div>
<div class="t" style="left:6.35px;top:452.04px;font-size:13.3px;color:#2a7a50;transform:scaleX(0.9666);">12</div>
<div class="t" style="left:6.35px;top:472.04px;font-size:13.3px;color:#2a7a50;transform:scaleX(0.9666);">13</div>
<div class="t" style="left:6.35px;top:492.04px;font-size:13.3px;color:#2a7a50;transform:scaleX(0.9666);">14</div>
<div class="t" style="left:6.50px;top:511.04px;font-size:13.3px;color:#161616;transform:scaleX(0.9463);clip-path:inset(0 0 9px 0);">15</div>
<div class="t" style="left:50.75px;top:232.04px;font-size:13.3px;color:#1a1a1a;font-weight:bold;transform:scaleX(1.0150);">ID</div>
<div class="t" style="left:89.80px;top:232.04px;font-size:13.3px;color:#1a1a1a;font-weight:bold;transform:scaleX(1.0188);">Department</div>
<div class="t" style="left:176.50px;top:232.04px;font-size:13.3px;color:#1a1a1a;font-weight:bold;transform:scaleX(1.0059);">Date of birth</div>
<div class="t" style="left:264.80px;top:232.04px;font-size:13.3px;color:#1a1a1a;font-weight:bold;transform:scaleX(0.9730);">First Name</div>
<div class="t" style="left:346.80px;top:232.04px;font-size:13.3px;color:#1a1a1a;font-weight:bold;transform:scaleX(0.9627);">Last Name</div>
<div class="t" style="left:40.93px;top:252.04px;font-size:13.3px;color:#161616;transform:scaleX(0.9745);">1-001</div>
<div class="t" style="left:89.80px;top:252.04px;font-size:13.3px;color:#161616;transform:scaleX(1.0676);">Marketing</div>
<div class="t" style="left:198.47px;top:252.04px;font-size:13.3px;color:#161616;transform:scaleX(1.0399);">1978/10/2</div>
<div class="t" style="left:264.80px;top:252.04px;font-size:13.3px;color:#161616;transform:scaleX(0.9382);">Jane</div>
<div class="t" style="left:346.80px;top:252.04px;font-size:13.3px;color:#161616;transform:scaleX(0.9817);">Jane Smith</div>
<div class="t" style="left:40.93px;top:272.04px;font-size:13.3px;color:#161616;transform:scaleX(0.9745);">1-002</div>
<div class="t" style="left:89.80px;top:272.04px;font-size:13.3px;color:#161616;transform:scaleX(1.0676);">Marketing</div>
<div class="t" style="left:198.47px;top:272.04px;font-size:13.3px;color:#161616;transform:scaleX(1.0399);">1985/5/21</div>
<div class="t" style="left:264.80px;top:272.04px;font-size:13.3px;color:#161616;transform:scaleX(0.9775);">John</div>
<div class="t" style="left:346.80px;top:272.04px;font-size:13.3px;color:#161616;transform:scaleX(0.9767);">John Garcia</div>
<div class="t" style="left:40.93px;top:292.04px;font-size:13.3px;color:#161616;transform:scaleX(0.9745);">1-003</div>
<div class="t" style="left:89.80px;top:292.04px;font-size:13.3px;color:#161616;transform:scaleX(1.0676);">Marketing</div>
<div class="t" style="left:205.62px;top:292.04px;font-size:13.3px;color:#161616;transform:scaleX(1.0504);">1993/6/4</div>
<div class="t" style="left:264.80px;top:292.04px;font-size:13.3px;color:#161616;transform:scaleX(0.9389);">Eliza</div>
<div class="t" style="left:346.80px;top:292.04px;font-size:13.3px;color:#161616;transform:scaleX(0.9748);">Eliza Rodriguez</div>
<div class="t" style="left:40.93px;top:312.04px;font-size:13.3px;color:#161616;transform:scaleX(0.9745);">1-004</div>
<div class="t" style="left:89.80px;top:312.04px;font-size:13.3px;color:#161616;transform:scaleX(1.0676);">Marketing</div>
<div class="t" style="left:191.32px;top:312.04px;font-size:13.3px;color:#161616;transform:scaleX(1.0318);">1990/10/25</div>
<div class="t" style="left:264.80px;top:312.04px;font-size:13.3px;color:#161616;transform:scaleX(0.9926);">Thomas</div>
<div class="t" style="left:346.80px;top:312.04px;font-size:13.3px;color:#161616;">Thomas Hernandez</div>
<div class="t" style="left:40.93px;top:332.04px;font-size:13.3px;color:#161616;transform:scaleX(0.9745);">2-001</div>
<div class="t" style="left:89.80px;top:332.04px;font-size:13.3px;color:#161616;transform:scaleX(0.9020);">HR</div>
<div class="t" style="left:205.62px;top:332.04px;font-size:13.3px;color:#161616;transform:scaleX(1.0504);">1984/1/2</div>
<div class="t" style="left:264.80px;top:332.04px;font-size:13.3px;color:#161616;transform:scaleX(1.0055);">David</div>
<div class="t" style="left:346.80px;top:332.04px;font-size:13.3px;color:#161616;">David Green</div>
<div class="t" style="left:40.93px;top:352.04px;font-size:13.3px;color:#161616;transform:scaleX(0.9745);">2-002</div>
<div class="t" style="left:89.80px;top:352.04px;font-size:13.3px;color:#161616;transform:scaleX(0.9020);">HR</div>
<div class="t" style="left:198.47px;top:352.04px;font-size:13.3px;color:#161616;transform:scaleX(1.0399);">1992/5/30</div>
<div class="t" style="left:264.80px;top:352.04px;font-size:13.3px;color:#161616;transform:scaleX(1.0701);">William</div>
<div class="t" style="left:346.80px;top:352.04px;font-size:13.3px;color:#161616;transform:scaleX(1.0681);">William White</div>
<div class="t" style="left:40.93px;top:372.04px;font-size:13.3px;color:#161616;transform:scaleX(0.9745);">2-003</div>
<div class="t" style="left:89.80px;top:372.04px;font-size:13.3px;color:#161616;transform:scaleX(0.9020);">HR</div>
<div class="t" style="left:205.62px;top:372.04px;font-size:13.3px;color:#161616;transform:scaleX(1.0504);">1989/5/1</div>
<div class="t" style="left:264.80px;top:372.04px;font-size:13.3px;color:#161616;transform:scaleX(0.9955);">Nancy</div>
<div class="t" style="left:346.80px;top:372.04px;font-size:13.3px;color:#161616;transform:scaleX(0.9875);">Nancy Johnson</div>
<div class="t" style="left:40.93px;top:392.04px;font-size:13.3px;color:#161616;transform:scaleX(0.9745);">3-001</div>
<div class="t" style="left:89.80px;top:392.04px;font-size:13.3px;color:#161616;transform:scaleX(0.9295);">IT</div>
<div class="t" style="left:205.62px;top:392.04px;font-size:13.3px;color:#161616;transform:scaleX(1.0504);">1987/4/3</div>
<div class="t" style="left:264.80px;top:392.04px;font-size:13.3px;color:#161616;transform:scaleX(1.0736);">Mary</div>
<div class="t" style="left:346.80px;top:392.04px;font-size:13.3px;color:#161616;transform:scaleX(1.0518);">Mary Brown</div>
<div class="t" style="left:40.93px;top:412.04px;font-size:13.3px;color:#161616;transform:scaleX(0.9745);">3-002</div>
<div class="t" style="left:89.80px;top:412.04px;font-size:13.3px;color:#161616;transform:scaleX(0.9295);">IT</div>
<div class="t" style="left:205.62px;top:412.04px;font-size:13.3px;color:#161616;transform:scaleX(1.0504);">1994/2/6</div>
<div class="t" style="left:264.80px;top:412.04px;font-size:13.3px;color:#161616;transform:scaleX(0.9652);">Joseph</div>
<div class="t" style="left:346.80px;top:412.04px;font-size:13.3px;color:#161616;transform:scaleX(1.0245);">Joseph Miller</div>
<div class="t" style="left:40.93px;top:432.04px;font-size:13.3px;color:#161616;transform:scaleX(0.9745);">3-003</div>
<div class="t" style="left:89.80px;top:432.04px;font-size:13.3px;color:#161616;transform:scaleX(0.9295);">IT</div>
<div class="t" style="left:198.47px;top:432.04px;font-size:13.3px;color:#161616;transform:scaleX(1.0399);">1990/9/15</div>
<div class="t" style="left:264.80px;top:432.04px;font-size:13.3px;color:#161616;transform:scaleX(1.0080);">Danial</div>
<div class="t" style="left:346.80px;top:432.04px;font-size:13.3px;color:#161616;transform:scaleX(1.0293);">Danial Taylor</div>
<div class="t" style="left:40.93px;top:452.04px;font-size:13.3px;color:#161616;transform:scaleX(0.9745);">4-001</div>
<div class="t" style="left:89.80px;top:452.04px;font-size:13.3px;color:#161616;transform:scaleX(0.9859);">Finance</div>
<div class="t" style="left:205.62px;top:452.04px;font-size:13.3px;color:#161616;transform:scaleX(1.0504);">1979/6/5</div>
<div class="t" style="left:264.80px;top:452.04px;font-size:13.3px;color:#161616;transform:scaleX(1.0232);">Ann</div>
<div class="t" style="left:346.80px;top:452.04px;font-size:13.3px;color:#161616;transform:scaleX(0.9926);">Ann Clark</div>
<div class="t" style="left:40.93px;top:472.04px;font-size:13.3px;color:#161616;transform:scaleX(0.9745);">4-002</div>
<div class="t" style="left:89.80px;top:472.04px;font-size:13.3px;color:#161616;transform:scaleX(0.9859);">Finance</div>
<div class="t" style="left:198.47px;top:472.04px;font-size:13.3px;color:#161616;transform:scaleX(1.0399);">1981/8/10</div>
<div class="t" style="left:264.80px;top:472.04px;font-size:13.3px;color:#161616;transform:scaleX(1.0849);">Martha</div>
<div class="t" style="left:346.80px;top:472.04px;font-size:13.3px;color:#161616;transform:scaleX(1.0565);">Martha Williams</div>
<div class="t" style="left:40.93px;top:492.04px;font-size:13.3px;color:#161616;transform:scaleX(0.9745);">4-003</div>
<div class="t" style="left:89.80px;top:492.04px;font-size:13.3px;color:#161616;transform:scaleX(0.9859);">Finance</div>
<div class="t" style="left:198.47px;top:492.04px;font-size:13.3px;color:#161616;transform:scaleX(1.0399);">1991/10/1</div>
<div class="t" style="left:264.80px;top:492.04px;font-size:13.3px;color:#161616;transform:scaleX(1.0649);">Margaret</div>
<div class="t" style="left:346.80px;top:492.04px;font-size:13.3px;color:#161616;transform:scaleX(1.0228);">Margaret Davis</div>
<div class="a" style="left:490px;top:165.5px;width:8px;height:33px;background:#e1f0e7;"></div>
<div class="a" style="left:490px;top:198px;width:8px;height:29px;background:#c4c4c4;"></div>
<div class="a" style="left:494px;top:228px;width:4px;height:289px;background:#e1f0e7;"></div>
<div class="a" style="left:0px;top:516px;width:498px;height:1px;background:#c2c2c2;"></div>
<div class="a" style="left:0px;top:517px;width:498px;height:27px;background:#e1f0e7;"></div>
<div class="a" style="left:101px;top:516px;width:92px;height:25px;background:#f4f4f4;border-left:1px solid #c2c2c2;border-right:1px solid #c2c2c2;"></div>
<div class="a" style="left:101px;top:539px;width:92px;height:2px;background:#217346;"></div>
<div class="t" style="left:113.50px;top:523.30px;font-size:13px;color:#1e6b43;font-weight:bold;transform:scaleX(0.9588);">personnels</div>
<div class="t" style="left:207.00px;top:523.30px;font-size:13px;color:#444;transform:scaleX(1.0502);">Drop down list</div>
<div class="a" style="left:307px;top:520.5px;width:1px;height:19px;background:#b4b4b4;"></div>
<svg class="a" style="left:340.5px;top:521.4px;" width="17" height="17" viewBox="0 0 17 17" fill="none" stroke="#767676" stroke-width="1.4"><circle cx="8.500" cy="8.500" r="7.300"/><path d="M8.500 4.500v8M4.500 8.500h8" stroke-width="1.600"/></svg>
<svg class="a" style="left:27px;top:526px;" width="6" height="8" viewBox="0 0 6 8" fill="none" stroke="none" stroke-width="1"><path d="M5 0.500v7l-4.500-3.500z" fill="#c4c4c4"/></svg>
<svg class="a" style="left:55.5px;top:526px;" width="6" height="8" viewBox="0 0 6 8" fill="none" stroke="none" stroke-width="1"><path d="M1 0.500v7l4.500-3.500z" fill="#c4c4c4"/></svg>
<div class="a" style="left:0px;top:544px;width:1068px;height:23px;background:#f4f4f4;"></div>
<div class="a" style="left:0px;top:543.5px;width:1068px;height:1px;background:#cfcfcf;"></div>
<div class="t" style="left:8.00px;top:550.14px;font-size:12px;color:#444;transform:scaleX(0.8793);">Ready</div>
<svg class="a" style="left:59px;top:549.5px;" width="15" height="13" viewBox="0 0 15 13" fill="none" stroke="none" stroke-width="1"><path d="M0.500 0.500h13v4M0.500 0.500v11h5" stroke="#444"/><path d="M2.500 3.500h9M2.500 6h4M2.500 8.500h3" stroke="#444" stroke-width="0.900"/><circle cx="10" cy="8.500" r="3.500" stroke="#444"/><circle cx="10" cy="8.500" r="1.500" fill="#444"/></svg>
<svg class="a" style="left:90.5px;top:547.5px;" width="16" height="15" viewBox="0 0 16 15" fill="none" stroke="none" stroke-width="1"><circle cx="6.500" cy="2.300" r="1.700" stroke="#444" stroke-width="1"/><path d="M1.200 3.200q1.300 3 5.300 3q4 0 5.300-3M6.500 6.200v3.300M6.500 9.500l-2.800 4.800M6.500 9.500l1.200 1.500" stroke="#444" stroke-width="1.100"/><path d="M8.300 11.800l2 2.200l4.200-5" stroke="#444" stroke-width="1.200"/></svg>
<div class="t" style="left:108.00px;top:550.14px;font-size:12px;color:#444;transform:scaleX(0.9627);">Accessibility: Good to go</div>
<div class="a" style="left:488px;top:517px;width:10px;height:27px;background:#c6c6c6;"></div>
<div class="a" style="left:486px;top:545px;width:12px;height:16px;background:#e1f0e7;"></div>
<div class="a" style="left:0px;top:0px;width:1px;height:567px;background:#6e6e6e;"></div>
<div class="a" style="left:26px;top:508px;width:1px;height:9px;background:#c0c0c0;"></div>
<div class="a" style="left:0px;top:566px;width:1068px;height:1px;background:#8a8a8a;"></div>
<!-- gen_dialog -->
<div class="a" style="left:492px;top:143px;width:6px;height:18px;background:#e1f0e7;"></div>
<div class="a" style="left:1063px;top:143px;width:4px;height:424px;background:#d2d2d2;"></div>
<div class="a" style="left:1067px;top:143px;width:1px;height:424px;background:#b4b4b4;"></div>
<div class="a" style="left:1063px;top:161px;width:5px;height:5px;background:#bdbdbd;"></div>
<div class="a" style="left:498px;top:561px;width:570px;height:6px;background:#c9c9c9;"></div>
<div class="a" style="left:498px;top:564.5px;width:570px;height:1px;background:#b4b4b4;"></div>
<div class="a" style="left:506px;top:140.3px;width:557px;height:2px;background:#c6c6c6;"></div>
<div class="a" style="left:487px;top:165px;width:11px;height:7.5px;background:#c4c4c4;"></div>
<div class="a" style="left:497.5px;top:142px;width:565.5px;height:419px;background:#f4f4f4;border:1px solid #5d8c71;"></div>
<div class="a" style="left:1061.2px;top:142px;width:1.5px;height:419px;background:#4f7560;"></div>
<div class="a" style="left:1062.7px;top:143px;width:0.8px;height:418px;background:#777;"></div>
<div class="a" style="left:497.5px;top:559.2px;width:565.5px;height:1.6px;background:#55715f;"></div>
<div class="t" style="left:507.30px;top:152.30px;font-size:13px;color:#111;transform:scaleX(0.9932);">Combine Rows, Columns or Cells without Losing Data</div>
<div class="t" style="left:990.75px;top:152.72px;font-size:12.5px;color:#111;font-weight:bold;transform:scaleX(0.8513);">?</div>
<svg class="a" style="left:1033.5px;top:152.5px;" width="11" height="11" viewBox="0 0 11 11" fill="none" stroke="#111" stroke-width="1.1"><path d="M0.500 0.500l10 10M10.500 0.500l-10 10"/></svg>
<div class="a" style="left:507px;top:189px;width:548px;height:49px;border:1px solid #d2d2d2;"></div>
<div class="t" style="left:511.70px;top:183.57px;font-size:11.5px;color:#141414;transform:scaleX(0.9296);background:#f4f4f4;padding:0 2.500px;">To combine selected cells according to following options:</div>
<div class="a" style="left:523.0px;top:209.3px;width:13px;height:13px;background:#fafafa;border:1px solid #333;border-radius:50%;"></div>
<div class="a" style="left:526.0px;top:212.3px;width:7px;height:7px;background:#333;border-radius:50%;"></div>
<div class="t" style="left:537.90px;top:210.57px;font-size:11.5px;color:#141414;transform:scaleX(0.8877);">Combine columns</div>
<div class="a" style="left:651.2px;top:209.3px;width:13px;height:13px;background:#fafafa;border:1px solid #333;border-radius:50%;"></div>
<div class="t" style="left:668.90px;top:210.57px;font-size:11.5px;color:#141414;transform:scaleX(0.9048);">Combine rows</div>
<div class="a" style="left:783.8px;top:209.3px;width:13px;height:13px;background:#fafafa;border:1px solid #333;border-radius:50%;"></div>
<div class="t" style="left:798.70px;top:210.57px;font-size:11.5px;color:#141414;transform:scaleX(0.9057);">Combine into single cell</div>
<div class="a" style="left:507px;top:247px;width:271px;height:120.5px;border:1px solid #d2d2d2;"></div>
<div class="t" style="left:511.70px;top:242.57px;font-size:11.5px;color:#141414;transform:scaleX(0.9553);background:#f4f4f4;padding:0 2.500px;">Specify a separator:</div>
<div class="a" style="left:523.0px;top:269.0px;width:13px;height:13px;background:#fafafa;border:1px solid #333;border-radius:50%;"></div>
<div class="a" style="left:526.0px;top:272.0px;width:7px;height:7px;background:#333;border-radius:50%;"></div>
<div class="t" style="left:537.90px;top:270.57px;font-size:11.5px;color:#141414;transform:scaleX(0.8740);">Space</div>
<div class="a" style="left:651.0px;top:269.0px;width:13px;height:13px;background:#fafafa;border:1px solid #333;border-radius:50%;"></div>
<div class="t" style="left:665.70px;top:270.57px;font-size:11.5px;color:#141414;transform:scaleX(0.9334);">Nothing</div>
<div class="a" style="left:523.0px;top:302.0px;width:13px;height:13px;background:#fafafa;border:1px solid #333;border-radius:50%;"></div>
<div class="t" style="left:537.90px;top:303.57px;font-size:11.5px;color:#141414;transform:scaleX(0.8888);">New line</div>
<div class="a" style="left:651.0px;top:302.0px;width:13px;height:13px;background:#fafafa;border:1px solid #333;border-radius:50%;"></div>
<div class="t" style="left:665.70px;top:303.57px;font-size:11.5px;color:#141414;transform:scaleX(0.8716);">Semicolon</div>
<div class="a" style="left:523.0px;top:337.1px;width:13px;height:13px;background:#fafafa;border:1px solid #333;border-radius:50%;"></div>
<div class="t" style="left:537.90px;top:338.57px;font-size:11.5px;color:#141414;transform:scaleX(0.9697);">Other separator:</div>
<div class="a" style="left:651px;top:333.5px;width:113px;height:20px;background:#efefef;border:1px solid #c4c4c4;"></div>
<div class="t" style="left:654.50px;top:337.99px;font-size:11px;color:#8a8a8a;transform:scaleX(0.8060);">@</div>
<svg class="a" style="left:750px;top:340.5px;" width="10" height="7" viewBox="0 0 10 7" fill="none" stroke="#a8a8a8" stroke-width="1"><path d="M1 1l4 4l4-4"/></svg>
<div class="t" style="left:506.50px;top:380.57px;font-size:11.5px;color:#141414;transform:scaleX(0.9436);">Place the results to:</div>
<div class="a" style="left:651px;top:377px;width:113px;height:20.5px;background:#dff0e6;border:1px solid #9a9a9a;"></div>
<div class="t" style="left:654.50px;top:382.57px;font-size:11.5px;color:#141414;transform:scaleX(0.9091);">Right cell</div>
<svg class="a" style="left:750px;top:384px;" width="10" height="7" viewBox="0 0 10 7" fill="none" stroke="#333" stroke-width="1.2"><path d="M1 1l4 4l4-4"/></svg>
<div class="a" style="left:507px;top:410px;width:271px;height:109.5px;border:1px solid #d2d2d2;"></div>
<div class="t" style="left:511.70px;top:405.57px;font-size:11.5px;color:#141414;transform:scaleX(0.9340);background:#f4f4f4;padding:0 2.500px;">Options:</div>
<div class="a" style="left:523.0px;top:429.0px;width:13px;height:13px;background:#fafafa;border:1px solid #333;border-radius:50%;"></div>
<div class="a" style="left:526.0px;top:432.0px;width:7px;height:7px;background:#333;border-radius:50%;"></div>
<div class="t" style="left:537.90px;top:430.57px;font-size:11.5px;color:#141414;transform:scaleX(0.9217);">Keep contents of combined cells</div>
<div class="a" style="left:523.0px;top:458.2px;width:13px;height:13px;background:#fafafa;border:1px solid #333;border-radius:50%;"></div>
<div class="t" style="left:537.90px;top:459.57px;font-size:11.5px;color:#141414;transform:scaleX(0.9281);">Delete contents of combined cells</div>
<div class="a" style="left:523.0px;top:487.5px;width:13px;height:13px;background:#fafafa;border:1px solid #333;border-radius:50%;"></div>
<div class="t" style="left:537.90px;top:488.57px;font-size:11.5px;color:#141414;transform:scaleX(0.9158);">Merge the combined cells</div>
<div class="a" style="left:508px;top:533.3px;width:12.8px;height:12.8px;background:#fafafa;border:1px solid #333;"></div>
<div class="t" style="left:522.70px;top:534.57px;font-size:11.5px;color:#141414;transform:scaleX(0.9479);">Use formatted values</div>
<div class="a" style="left:785px;top:246px;width:269px;height:273px;border:1px dotted #111;"></div>
<div class="a" style="left:795px;top:257px;width:233px;height:105px;background:#f4f4f4;border:1px solid #a6d2ea;"></div>
<div class="a" style="left:853px;top:257px;width:1px;height:105px;background:#a6d2ea;"></div>
<div class="a" style="left:795px;top:283px;width:233px;height:1px;background:#a6d2ea;"></div>
<div class="a" style="left:911px;top:257px;width:1px;height:105px;background:#a6d2ea;"></div>
<div class="a" style="left:795px;top:309px;width:233px;height:1px;background:#a6d2ea;"></div>
<div class="a" style="left:969px;top:257px;width:1px;height:105px;background:#a6d2ea;"></div>
<div class="a" style="left:795px;top:335px;width:233px;height:1px;background:#a6d2ea;"></div>
<div class="t" style="left:820.00px;top:265.57px;font-size:11.5px;color:#111;">a</div>
<div class="t" style="left:878.00px;top:265.57px;font-size:11.5px;color:#111;">b</div>
<div class="t" style="left:936.33px;top:265.57px;font-size:11.5px;color:#111;">c</div>
<div class="t" style="left:994.00px;top:265.57px;font-size:11.5px;color:#111;">d</div>
<div class="t" style="left:820.00px;top:291.57px;font-size:11.5px;color:#111;">e</div>
<div class="t" style="left:879.60px;top:291.57px;font-size:11.5px;color:#111;">f</div>
<div class="t" style="left:936.00px;top:291.57px;font-size:11.5px;color:#111;">g</div>
<div class="t" style="left:994.00px;top:291.57px;font-size:11.5px;color:#111;">h</div>
<div class="t" style="left:821.92px;top:317.57px;font-size:11.5px;color:#111;">i</div>
<div class="t" style="left:879.92px;top:317.57px;font-size:11.5px;color:#111;">j</div>
<div class="t" style="left:936.33px;top:317.57px;font-size:11.5px;color:#111;">k</div>
<div class="t" style="left:995.92px;top:317.57px;font-size:11.5px;color:#111;">l</div>
<div class="t" style="left:818.41px;top:343.57px;font-size:11.5px;color:#111;">m</div>
<div class="t" style="left:878.00px;top:343.57px;font-size:11.5px;color:#111;">n</div>
<div class="t" style="left:936.00px;top:343.57px;font-size:11.5px;color:#111;">o</div>
<div class="t" style="left:994.00px;top:343.57px;font-size:11.5px;color:#111;">p</div>
<div class="a" style="left:908.7px;top:370.5px;width:1.4px;height:22px;background:#6a6a6a;"></div>
<svg class="a" style="left:905.4px;top:389.5px;" width="8" height="8" viewBox="0 0 8 8" fill="none" stroke="none" stroke-width="1"><path d="M0.300 0.500h7.400l-3.700 7z" fill="#6a6a6a"/></svg>
<div class="a" style="left:810px;top:403px;width:233px;height:105px;background:#f4f4f4;border:1px solid #a6d2ea;"></div>
<div class="a" style="left:868px;top:403px;width:1px;height:105px;background:#a6d2ea;"></div>
<div class="a" style="left:810px;top:429px;width:233px;height:1px;background:#a6d2ea;"></div>
<div class="a" style="left:926px;top:403px;width:1px;height:105px;background:#a6d2ea;"></div>
<div class="a" style="left:810px;top:455px;width:233px;height:1px;background:#a6d2ea;"></div>
<div class="a" style="left:984px;top:403px;width:1px;height:105px;background:#a6d2ea;"></div>
<div class="a" style="left:810px;top:481px;width:233px;height:1px;background:#a6d2ea;"></div>
<div class="t" style="left:835.00px;top:411.57px;font-size:11.5px;color:#111;">a</div>
<div class="t" style="left:893.00px;top:411.57px;font-size:11.5px;color:#111;">b</div>
<div class="t" style="left:951.33px;top:411.57px;font-size:11.5px;color:#111;">c</div>
<div class="t" style="left:997.76px;top:411.57px;font-size:11.5px;color:#111;transform:scaleX(0.9000);">a b c d</div>
<div class="t" style="left:835.00px;top:437.57px;font-size:11.5px;color:#111;">e</div>
<div class="t" style="left:894.60px;top:437.57px;font-size:11.5px;color:#111;">f</div>
<div class="t" style="left:951.00px;top:437.57px;font-size:11.5px;color:#111;">g</div>
<div class="t" style="left:998.91px;top:437.57px;font-size:11.5px;color:#111;transform:scaleX(0.9000);">e f g h</div>
<div class="t" style="left:836.92px;top:463.57px;font-size:11.5px;color:#111;">i</div>
<div class="t" style="left:894.92px;top:463.57px;font-size:11.5px;color:#111;">j</div>
<div class="t" style="left:951.33px;top:463.57px;font-size:11.5px;color:#111;">k</div>
<div class="t" style="left:1002.95px;top:463.57px;font-size:11.5px;color:#111;transform:scaleX(0.9000);">i j k l</div>
<div class="t" style="left:833.41px;top:489.57px;font-size:11.5px;color:#111;">m</div>
<div class="t" style="left:893.00px;top:489.57px;font-size:11.5px;color:#111;">n</div>
<div class="t" style="left:951.00px;top:489.57px;font-size:11.5px;color:#111;">o</div>
<div class="t" style="left:996.04px;top:489.57px;font-size:11.5px;color:#111;transform:scaleX(0.9000);">m n o p</div>
<div class="a" style="left:819px;top:528px;width:72.8px;height:22.8px;background:#dff0e6;border:2px solid #0a5db0;"></div>
<div class="t" style="left:847.80px;top:534.57px;font-size:11.5px;color:#141414;transform:scaleX(0.8426);">OK</div>
<div class="a" style="left:848px;top:545px;width:8px;height:1px;background:#1a1a1a;"></div>
<div class="a" style="left:900px;top:528px;width:73px;height:23px;background:#dff0e6;border:1px solid #a8a8a8;"></div>
<div class="t" style="left:919.50px;top:534.57px;font-size:11.5px;color:#141414;transform:scaleX(0.8939);">Cancel</div>
<div class="a" style="left:920px;top:545px;width:7px;height:1px;background:#1a1a1a;"></div>
<div class="a" style="left:981px;top:528px;width:73px;height:23px;background:#dff0e6;border:1px solid #a8a8a8;"></div>
<div class="t" style="left:1003.80px;top:534.57px;font-size:11.5px;color:#141414;transform:scaleX(0.9212);">Apply</div>
</body></html>
